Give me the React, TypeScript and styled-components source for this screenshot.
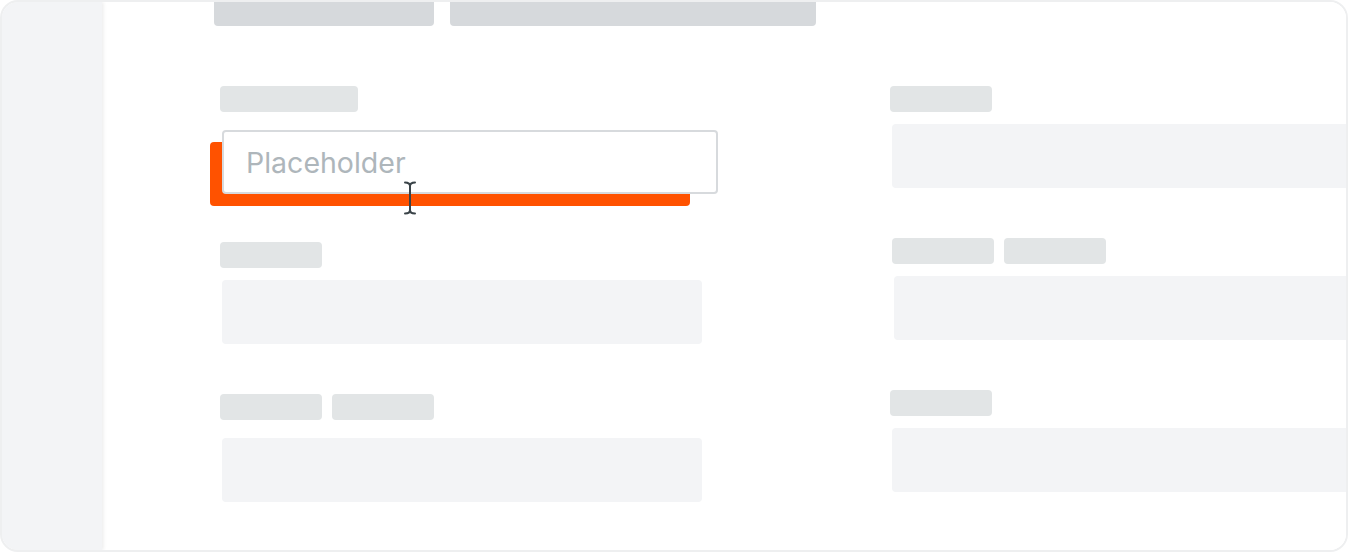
import React from 'react';
import styled, { createGlobalStyle } from 'styled-components';

const GlobalStyle = createGlobalStyle`
  html, body {
    margin: 0;
    padding: 0;
    background: #ffffff;
  }
  body {
    font-family: Inter, "Noto Sans", "Liberation Sans", sans-serif;
  }
`;

type LabelSpec = number[];

type GroupProps = {
  labels: LabelSpec;
  top: number;
  gap: number;
  shift?: number;
  wide?: boolean;
};

function FieldGroup({ labels, top, gap, shift = 0, wide = false }: GroupProps): JSX.Element {
  return (
    <Group $top={top} $shift={shift}>
      <LabelRow>
        {labels.map((w, i) => (
          <Label key={i} $width={w} />
        ))}
      </LabelRow>
      <Box $gap={gap} $wide={wide} />
    </Group>
  );
}

function TextCursor(): JSX.Element {
  return (
    <Cursor width="12" height="34" viewBox="0 0 12 34" fill="none">
      <path
        d="M1 1.5C3.5 1.5 6 2.5 6 5V29C6 31.5 3.5 32.5 1 32.5M11 1.5C8.5 1.5 6 2.5 6 5M6 29C6 31.5 8.5 32.5 11 32.5"
        stroke="#3a4348"
        strokeWidth="2"
        strokeLinecap="round"
      />
    </Cursor>
  );
}

export default function App(): JSX.Element {
  return (
    <>
      <GlobalStyle />
      <Frame>
        <Sidebar />
        <Main>
          <TopBars>
            <TopBar $width={220} />
            <TopBar $width={366} />
          </TopBars>
          <Columns>
            <Column>
              <Label $width={138} />
              <InputWrap>
                <Highlight />
                <Input placeholder="Placeholder" readOnly />
                <TextCursor />
              </InputWrap>
              <FieldGroup labels={[102]} top={48} gap={12} />
              <FieldGroup labels={[102, 102]} top={50} gap={18} />
            </Column>
            <Column>
              <FieldGroup labels={[102]} top={0} gap={12} wide />
              <FieldGroup labels={[102, 102]} top={50} gap={12} shift={2} wide />
              <FieldGroup labels={[102]} top={50} gap={12} wide />
            </Column>
          </Columns>
        </Main>
      </Frame>
    </>
  );
}

const Frame = styled.div`
  box-sizing: border-box;
  width: 1348px;
  height: 552px;
  border: 2px solid #eeeff0;
  border-radius: 18px;
  overflow: hidden;
  display: flex;
  background: #ffffff;
`;

const Sidebar = styled.aside`
  flex: 0 0 100px;
  background: #f3f4f6;
  box-shadow: 1px 0 4px rgba(0, 0, 0, 0.09);
  position: relative;
  z-index: 1;
`;

const Main = styled.main`
  flex: 1;
  min-width: 0;
  overflow: hidden;
  padding-left: 112px;
  background: #ffffff;
`;

const TopBars = styled.div`
  display: flex;
  gap: 16px;
`;

const TopBar = styled.div<{ $width: number }>`
  width: ${(p) => p.$width}px;
  height: 24px;
  background: #d6d9dc;
  border-radius: 0 0 4px 4px;
`;

const Columns = styled.div`
  display: grid;
  grid-template-columns: 670px 1fr;
  margin-top: 60px;
  padding-left: 6px;
`;

const Column = styled.div`
  display: flex;
  flex-direction: column;
  min-width: 0;
`;

const Group = styled.div<{ $top: number; $shift: number }>`
  display: flex;
  flex-direction: column;
  margin-top: ${(p) => p.$top}px;
  margin-left: ${(p) => p.$shift}px;
`;

const LabelRow = styled.div`
  display: flex;
  gap: 10px;
`;

const Label = styled.div<{ $width: number }>`
  width: ${(p) => p.$width}px;
  height: 26px;
  background: #e2e5e6;
  border-radius: 4px;
`;

const Box = styled.div<{ $gap: number; $wide: boolean }>`
  margin-top: ${(p) => p.$gap}px;
  margin-left: 2px;
  width: ${(p) => (p.$wide ? '640px' : '480px')};
  height: 64px;
  background: #f3f4f6;
  border-radius: 4px;
`;

const InputWrap = styled.div`
  position: relative;
  margin-top: 18px;
  margin-left: 2px;
  width: 496px;
  height: 64px;
`;

const Highlight = styled.div`
  position: absolute;
  left: -12px;
  top: 12px;
  width: 480px;
  height: 64px;
  background: #ff5200;
  border-radius: 4px;
`;

const Input = styled.input`
  position: relative;
  box-sizing: border-box;
  width: 100%;
  height: 100%;
  margin: 0;
  padding: 0 22px;
  border: 2px solid #d7dadd;
  border-radius: 4px;
  background: #ffffff;
  font-family: Inter, "Noto Sans", sans-serif;
  font-size: 28.5px;
  color: #39424a;
  outline: none;

  &::placeholder {
    color: #aeb6bb;
  }
`;

const Cursor = styled.svg`
  position: absolute;
  left: 182px;
  top: 51px;
`;
